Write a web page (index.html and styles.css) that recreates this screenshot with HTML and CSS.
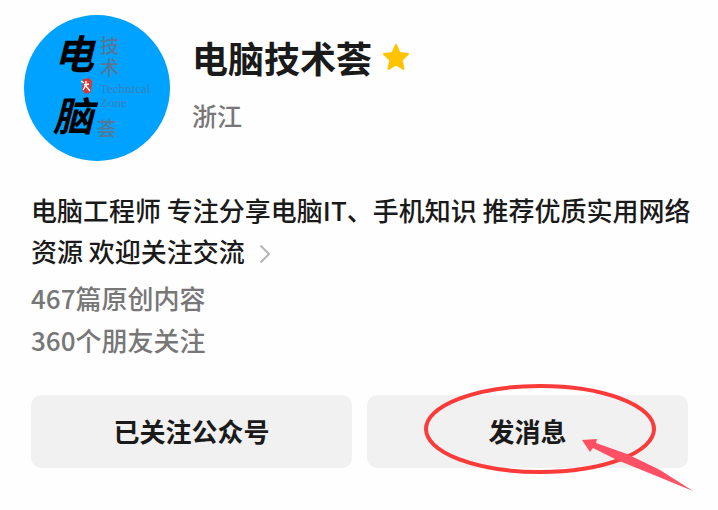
FILE: index.html
```
<!DOCTYPE html>
<html lang="zh-CN">
<head>
    <meta charset="UTF-8">
    <meta name="viewport" content="width=device-width, initial-scale=1.0">
    <title>电脑技术荟</title>
    <link rel="stylesheet" href="styles.css">
</head>
<body>
    <main class="profile">
        <header class="profile-head">
            <svg class="avatar" viewBox="0 0 146 146" role="img" aria-label="电脑技术荟">
                <circle cx="73" cy="73" r="73" fill="#00a2ff"/>
                <text class="logo-big" x="30" y="54">电</text>
                <text class="logo-big" x="29" y="116">脑</text>
                <path d="M59 64 L65 63 L68 66 L67 77 L62 79 L58 75 Z" fill="#d13a35"/>
                <path d="M57 66 L60 68 M62 66 L62 70 L59 75 M60 70 L65 69 M62 71 L66 76" fill="none" stroke="#fff" stroke-width="1.4"/>
                <text class="logo-small" x="76" y="38">技</text>
                <text class="logo-small" x="76" y="60">术</text>
                <text class="logo-latin" x="76" y="78">Technical</text>
                <text class="logo-latin" x="76" y="92">Zone</text>
                <text class="logo-small" x="73" y="121">荟</text>
            </svg>
            <div class="profile-name">
                <h1>
                    电脑技术荟
                    <svg class="star" viewBox="0 0 28 28" aria-hidden="true">
                        <path d="M14 2 L17.5 10 L26 11 L19.700 17 L21.500 26 L14 21.500 L6.500 26 L8.300 17 L2 11 L10.500 10 Z" fill="#ffc300" stroke="#ffc300" stroke-width="2" stroke-linejoin="round"/>
                    </svg>
                </h1>
                <p>浙江</p>
            </div>
        </header>

        <section class="profile-info">
            <p class="intro">
                电脑工程师 专注分享电脑IT、手机知识 推荐优质实用网络资源 欢迎关注交流
                <svg class="chevron" viewBox="0 0 12 20" aria-hidden="true">
                    <path d="M1.500 1.500 L10 10 L1.500 18.500" fill="none" stroke="#b5b5b5" stroke-width="2"/>
                </svg>
            </p>
            <p class="stat">467篇原创内容</p>
            <p class="stat">360个朋友关注</p>
        </section>

        <div class="actions">
            <button type="button">已关注公众号</button>
            <div class="message">
                <button type="button">发消息</button>
                <!-- red circle and arrow over the button -->
                <svg class="mark" viewBox="0 0 272 108" aria-hidden="true">
                    <ellipse cx="116" cy="45" rx="114" ry="43" fill="none" stroke="#fb3a3a" stroke-width="4"/>
                    <path d="M158 56 L173 55 L172 59 L203 70 L236 86 L269 107 L230 91 L193 76 L169 64 L166 68 Z" fill="#ff5064"/>
                </svg>
            </div>
        </div>
    </main>
</body>
</html>
```
FILE: styles.css
```
*{
    padding: 0;
    margin: 0;
    box-sizing: border-box;
    font-family: "Noto Sans CJK SC", sans-serif;
}
body{
    background-color: #fefefe;
    color: #1a1a1a;
}
.profile{
    min-height: 100vh;
    padding: 15px 24px;
}
.profile-head{
    display: flex;
    gap: 22px;
}
.avatar{
    width: 146px;
    height: 146px;
    flex-shrink: 0;
}
.logo-big{
    font-size: 40px;
    font-weight: 700;
    font-style: italic;
}
.logo-small{
    font-size: 19px;
    font-weight: 500;
    fill: #557794;
}
.logo-latin{
    font-family: "Liberation Serif", serif;
    font-size: 13px;
    fill: #3682b8;
}
.profile-name{
    padding-top: 18px;
}
.profile-name h1{
    display: flex;
    align-items: center;
    gap: 10px;
    font-size: 36px;
    line-height: 48px;
    font-weight: 700;
}
.star{
    width: 28px;
    height: 28px;
}
.profile-name p{
    margin-top: 16px;
    font-size: 25px;
    line-height: 36px;
    font-weight: 500;
    color: #777;
}
.profile-info{
    margin-top: 28px;
    padding-left: 7px;
}
.intro{
    margin-bottom: 6px;
    font-size: 26px;
    line-height: 41px;
    font-weight: 500;
}
.chevron{
    width: 12px;
    height: 20px;
    margin-left: 8px;
    vertical-align: -2px;
}
.stat{
    font-size: 26px;
    line-height: 42px;
    font-weight: 500;
    color: #777;
}
.actions{
    display: grid;
    grid-template-columns: 1fr 1fr;
    gap: 15px;
    margin-top: 34px;
    padding: 0 6px 0 7px;
}
.actions button{
    width: 100%;
    padding: 15px 16px 17px;
    font-size: 26px;
    line-height: 41px;
    font-weight: 700;
    border: none;
    border-radius: 10px;
    color: #1a1a1a;
    background-color: #f1f1f1;
    cursor: pointer;
}
.message{
    position: relative;
}
.mark{
    position: absolute;
    top: -11px;
    right: -8px;
    width: 272px;
    height: 108px;
    pointer-events: none;
}
```
